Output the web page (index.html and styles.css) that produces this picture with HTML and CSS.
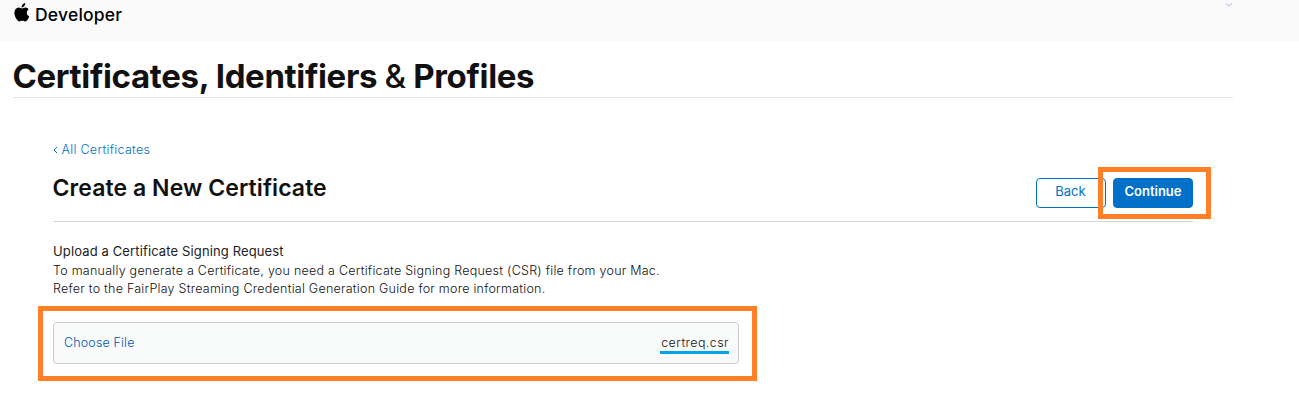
FILE: index.html
```html
<!DOCTYPE html>
<html lang="en">
<head>
<meta charset="utf-8">
<title>Certificates, Identifiers &amp; Profiles</title>
<link rel="stylesheet" href="styles.css">
</head>
<body>
<header class="topbar">
  <div class="brand">
    <svg class="apple" viewBox="0 0 16 19"><path d="M11.300 0c.1 1.200-.4 2.300-1 3.100-.7.800-1.700 1.400-2.700 1.300-.1-1.100.4-2.200 1-3C9.300.6 10.400.1 11.300 0zM14.700 6.500c-1.200.7-1.900 1.800-1.900 3.200 0 1.700 1 3 2.500 3.600-.4 1.100-.9 2.200-1.600 3.200-.8 1.200-1.600 1.900-2.600 1.900s-1.500-.6-2.900-.6-1.900.6-2.900.6c-1.100 0-1.900-1-2.700-2.100C.6 13.500-.4 9.500 1.100 6.900 1.900 5.500 3.300 4.600 4.800 4.600c1.300 0 2.200.8 3.400.8 1.100 0 2-.9 3.500-.9 1.300 0 2.200.7 3 2z"/></svg>
    <span class="brand-name">Developer</span>
  </div>
  <svg class="chevron" viewBox="0 0 8 5"><path d="M1 .5l3 2.500 3-2.500"/></svg>
</header>
<main class="page">
  <h1 class="title">Certificates, Identifiers <span class="amp">&amp;</span> Profiles</h1>
  <section class="content">
    <a class="back-link"><svg class="back-arrow" viewBox="0 0 5 8"><path d="M4 1L1 4l3 3"/></svg><span class="back-text">All Certificates</span></a>
    <div class="heading">
      <h2 class="subtitle">Create a New Certificate</h2>
      <div class="actions">
        <button class="btn">Back</button>
        <div class="focus-box"><button class="btn primary">Continue</button></div>
      </div>
    </div>
    <div class="copy">
      <div class="copy-head">Upload a Certificate Signing Request</div>
      <div class="line1">To manually generate a Certificate, you need a Certificate Signing Request (CSR) file from your Mac.</div>
      <div class="line2">Refer to the FairPlay Streaming Credential Generation Guide for more information.</div>
    </div>
    <div class="upload-frame">
      <div class="upload"><span class="choose">Choose File</span><span class="file">certreq.csr</span></div>
    </div>
  </section>
</main>
</body>
</html>
```
FILE: styles.css
```css
* { box-sizing: border-box; }
body { margin: 0; background: #fff; color: #111; font-family: Inter, "Liberation Sans", sans-serif; }
.topbar { display: flex; justify-content: space-between; height: 41px; padding: 0 66px 0 14px; background: #fafafa; }
.brand { display: flex; gap: 5px; height: 30px; padding-top: 3px; color: #000; }
.apple { width: 16px; height: 19px; }
.brand-name { font-size: 17.500px; font-weight: 500; line-height: 24px; letter-spacing: .2px; }
.chevron { width: 8px; height: 5px; margin-top: 3px; fill: none; stroke: #a3b9dc; }
.page { width: 1233px; padding-left: 13px; }
.title { margin: 0; height: 57px; padding-top: 15px; border-bottom: 1px solid #e3e3e3; font-size: 33px; font-weight: 700; line-height: 40px; letter-spacing: -.35px; text-indent: -.5px; white-space: nowrap; }
.amp { font-weight: 500; }
.content { padding: 42px 40px 0; }
.back-link { display: flex; align-items: center; gap: 4px; height: 20px; margin-top: -1px; color: #0070c9; font-size: 12.500px; font-weight: 300; letter-spacing: .3px; }
.back-arrow { width: 5px; height: 8px; margin: 2px 0 0 -.5px; fill: none; stroke: #0070c9; }
.heading { display: flex; justify-content: space-between; height: 63px; padding-top: 1px; border-bottom: 1px solid #d6d6d6; }
.subtitle { margin: 0; padding-top: 12px; font-size: 23px; font-weight: 600; line-height: 32px; letter-spacing: .08px; text-indent: -.5px; white-space: nowrap; }
.actions { display: flex; padding-top: 7px; margin-right: -18px; }
.btn { width: 70px; height: 30px; margin-top: 11px; border: 1px solid #0070c9; border-radius: 4px; background: #fff; color: #0070c9; font: 13px/24px Inter, sans-serif; padding: 0 1px 4px 0; }
.focus-box { position: relative; width: 113px; height: 52px; margin-left: -8px; border: 5px solid #ff7f27; padding: 6px 10px; }
.primary { width: 80px; margin: 0; padding-right: 0; background: #0070c9; color: #fff; font-weight: 600; }
.copy { padding-top: 20px; font-size: 12.500px; font-weight: 300; line-height: 18px; letter-spacing: .25px; color: #111; white-space: nowrap; }
.copy-head { height: 20px; font-size: 13px; font-weight: 400; line-height: 19px; letter-spacing: .13px; color: #222; }
.upload-frame { width: 719px; height: 75px; margin: 8px 0 0 -15px; border: 5px solid #ff7f27; padding: 11px 13px 12px 10px; }
.upload { display: flex; justify-content: space-between; height: 42px; padding: 9px 9px 9px 10px; border: 1px solid #ccc; border-radius: 4px; background: #f9fafa; font-size: 12.500px; font-weight: 300; line-height: 22px; letter-spacing: .15px; }
.choose { color: #0058b8; }
.file { height: 22px; border-bottom: 3px solid #00a2e8; letter-spacing: .42px; padding-left: 1px; }
```
